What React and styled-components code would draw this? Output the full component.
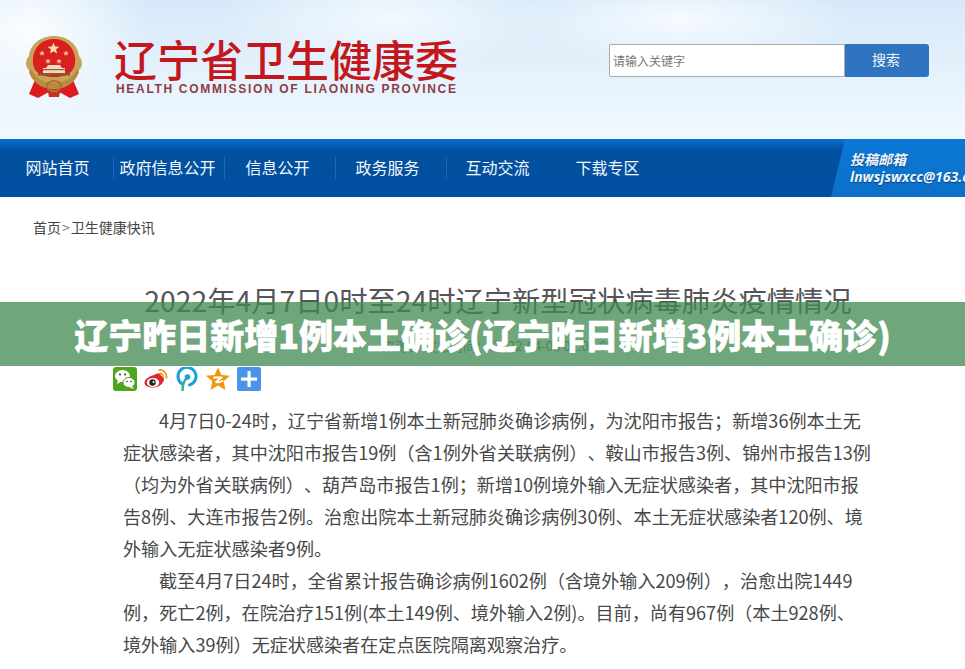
import React from "react";
import styled, { createGlobalStyle } from "styled-components";

const GlobalStyle = createGlobalStyle`
  html, body {
    margin: 0;
    padding: 0;
    background: #fff;
    overflow: hidden;
  }
  body {
    font-family: "Noto Sans CJK SC", "Liberation Sans", sans-serif;
  }
`;

const Page = styled.div`
  position: relative;
  width: 965px;
  height: 669px;
  overflow: hidden;
  background: #fff;
`;

const Header = styled.header`
  height: 139px;
  display: flex;
  align-items: flex-start;
  box-sizing: border-box;
  padding: 36px 36px 0 24px;
  background:
    radial-gradient(ellipse 120px 90px at 30px 30px, #fbfdff 0%, rgba(251, 253, 255, 0) 100%),
    radial-gradient(ellipse 170px 50px at 390px 18px, rgba(245, 250, 255, 0.9) 0%, rgba(245, 250, 255, 0) 100%),
    radial-gradient(ellipse 170px 45px at 680px 20px, rgba(247, 251, 255, 0.95) 0%, rgba(247, 251, 255, 0) 100%),
    linear-gradient(180deg, #d6e9f9 0%, #e3f0fb 45%, #f1f9ff 100%);
`;

const Emblem = styled.svg`
  width: 60px;
  height: 63px;
  flex: none;
`;

const Brand = styled.div`
  margin-left: 30px;
  width: 346px;
  flex: none;
`;

const BrandName = styled.div`
  font-size: 43px;
  line-height: 44px;
  font-weight: 500;
  color: #c3171d;
  white-space: nowrap;
`;

const BrandEnglish = styled.div`
  margin-top: 2px;
  margin-left: 2px;
  font-family: "Liberation Sans", sans-serif;
  font-size: 12px;
  line-height: 14px;
  font-weight: 700;
  letter-spacing: 1.68px;
  color: #8d3d46;
  white-space: nowrap;
`;

const SearchBox = styled.div`
  margin: 8px 0 0 auto;
  display: flex;
  height: 33px;
`;

const SearchInput = styled.div`
  width: 236px;
  box-sizing: border-box;
  display: flex;
  align-items: center;
  padding-left: 3px;
  background: #fff;
  border: 1px solid #ababab;
  border-radius: 2px 0 0 2px;
  font-size: 12px;
  color: #777;
`;

const SearchButton = styled.div`
  width: 84px;
  box-sizing: border-box;
  padding: 0 2px 4px 0;
  display: flex;
  align-items: center;
  justify-content: center;
  background: #2f74c0;
  border-radius: 0 3px 3px 0;
  font-size: 14px;
  color: #f2f7fc;
`;

const Nav = styled.nav`
  height: 58px;
  display: flex;
  padding-left: 3px;
  background: linear-gradient(180deg, #0a70d0 0%, #0460bb 9%, #02509f 20%, #024fa1 100%);
`;

const NavItem = styled.div`
  width: 111px;
  box-sizing: border-box;
  height: 58px;
  flex: none;
  display: flex;
  align-items: center;
  justify-content: center;
  position: relative;
  padding-right: ${(p) => p.$trim}px;
  padding-bottom: 2px;
  font-size: 16px;
  color: #f4f8fc;
  white-space: nowrap;

  &::after {
    content: ${(p) => (p.$divider ? '""' : "none")};
    position: absolute;
    right: 0;
    top: 18px;
    height: 22px;
    width: 1px;
    background: #1a66bd;
  }
`;

const Mailbox = styled.div`
  margin-left: auto;
  width: 134px;
  flex: none;
  box-sizing: border-box;
  padding: 11px 0 0 19px;
  overflow: hidden;
  white-space: nowrap;
  clip-path: polygon(14px 0, 100% 0, 100% 100%, 0 100%);
  background: linear-gradient(180deg, #0b78d6 0%, #0c70c8 100%);
  color: #eef6fd;
  font-style: italic;
  font-weight: 700;
  text-shadow: 0 1px 1px rgba(0, 40, 90, 0.7);
`;

const MailTitle = styled.div`
  font-size: 14px;
  line-height: 18px;
`;

const MailAddress = styled.div`
  font-family: "Open Sans", "Liberation Sans", sans-serif;
  font-size: 14px;
  line-height: 17px;
`;

const Breadcrumb = styled.div`
  display: flex;
  align-items: center;
  padding: 21px 0 0 33px;
  font-size: 14px;
  line-height: 19px;
  color: #444;
`;

const CrumbArrow = styled.span`
  margin: 0 1px;
  color: #777;
`;

const Article = styled.article`
  width: 750px;
  margin-left: 123px;
`;

const Title = styled.h1`
  margin: 43px -30px 0;
  font-size: 28.3px;
  line-height: 40px;
  font-weight: 400;
  color: #555;
  text-align: center;
  white-space: nowrap;
`;

const Meta = styled.div`
  margin-top: 16px;
  font-size: 13px;
  line-height: 20px;
  color: #777;
  text-align: center;
`;

const ShareRow = styled.div`
  display: flex;
  gap: 7px;
  margin: 11px 0 0 -10px;
`;

const ShareIcon = styled.svg`
  width: 24px;
  height: 24px;
  flex: none;
`;

const Body = styled.div`
  margin-top: 13px;
`;

const Paragraph = styled.p`
  margin: 0;
  font-size: 18.1px;
  line-height: 32px;
  color: #484848;
  text-indent: 36px;
  text-spacing-trim: space-all;
`;

const Banner = styled.div`
  position: absolute;
  left: 0;
  right: 0;
  top: 302px;
  height: 64px;
  display: flex;
  align-items: center;
  justify-content: center;
  background: rgba(66, 138, 82, 0.76);
  color: #fff;
  font-size: 34px;
  font-weight: 900;
  white-space: nowrap;
  -webkit-text-stroke: 0.6px #fff;
`;

function EmblemMark() {
  return (
    <Emblem viewBox="0 0 60 63">
      <path d="M11 44 L5 58 L14 62 L23 57 L30 55 L37 57 L46 62 L55 58 L49 44 Z" fill="#dc1b1f" />
      <path d="M30 0 C44 0 54 9 55 20 C59 24 59 31 55 34 C53 44 44 53 30 53 C16 53 7 44 5 34 C1 31 1 24 5 20 C6 9 16 0 30 0 Z" fill="#c9a35a" />
      <path d="M30 3 C42 3 50 11 51 22 C52 32 48 41 30 41 C12 41 8 32 9 22 C10 11 18 3 30 3 Z" fill="#d91f22" />
      <path d="M29.5 6.5 L31 10.5 L35.3 10.7 L32 13.4 L33.1 17.6 L29.5 15.2 L25.9 17.6 L27 13.4 L23.7 10.7 L28 10.5 Z" fill="#f5e2a0" />
      <path d="M18 14.5 l.8 1.8 2 .1 -1.5 1.3 .5 2 -1.8 -1.1 -1.8 1.1 .5 -2 -1.5 -1.3 2 -.1 Z" fill="#eed084" />
      <path d="M42 14.5 l.8 1.8 2 .1 -1.5 1.3 .5 2 -1.8 -1.1 -1.8 1.1 .5 -2 -1.5 -1.3 2 -.1 Z" fill="#eed084" />
      <path d="M24 22.5 l.8 1.8 2 .1 -1.5 1.3 .5 2 -1.8 -1.1 -1.8 1.1 .5 -2 -1.5 -1.3 2 -.1 Z" fill="#eed084" />
      <path d="M35 22.5 l.8 1.8 2 .1 -1.5 1.3 .5 2 -1.8 -1.1 -1.8 1.1 .5 -2 -1.5 -1.3 2 -.1 Z" fill="#eed084" />
      <path d="M24 29 H36 L38 32 H41 V37 H19 V32 H22 Z" fill="#eadcc0" />
      <rect x="19" y="33" width="22" height="1.2" fill="#b0503c" />
      <rect x="14" y="37" width="32" height="2.5" fill="#8f5a24" />
      <path d="M7 33 C12 44 22 47 30 47 C38 47 48 44 53 33 L55 36 C50 50 38 52 30 52 C22 52 10 50 5 36 Z" fill="#b98a3e" />
      <ellipse cx="30" cy="50" rx="7" ry="5" fill="none" stroke="#a8752c" strokeWidth="2.2" />
      <path d="M24 56 H36 L35 61 H25 Z" fill="#c2322a" />
    </Emblem>
  );
}

function WeChatIcon() {
  return (
    <ShareIcon viewBox="0 0 24 24">
      <rect width="24" height="24" rx="3" fill="#4ea61c" />
      <ellipse cx="9.5" cy="9" rx="7.5" ry="6" fill="#fff" />
      <path d="M5 13 L4 17 L9 14 Z" fill="#fff" />
      <ellipse cx="16" cy="15.5" rx="6" ry="5" fill="#fff" stroke="#4ea61c" />
      <path d="M19 19 L21 22 L16 20 Z" fill="#fff" />
      <circle cx="7" cy="7.5" r="1" fill="#333" />
      <circle cx="12" cy="7.5" r="1" fill="#333" />
      <circle cx="14" cy="14.5" r=".8" fill="#333" />
      <circle cx="18" cy="14.5" r=".8" fill="#333" />
    </ShareIcon>
  );
}

function WeiboIcon() {
  return (
    <ShareIcon viewBox="0 0 24 24">
      <path d="M10 8 C14 6 17 6 17 9 C20 9 21 12 19 15 C17 19 12 21 7 20.5 C3 20 0 18 0.5 15 C1 12 6 9 10 8 Z" fill="#e0242b" />
      <ellipse cx="9" cy="15.5" rx="6.2" ry="4.6" fill="#fff" />
      <circle cx="8.5" cy="15.5" r="3.2" fill="#222" />
      <circle cx="9.5" cy="15" r="1" fill="#fff" />
      <path d="M15 3 C19 2 23 6 22.5 11" fill="none" stroke="#f09a1a" strokeWidth="1.8" strokeLinecap="round" />
      <path d="M15.5 6.5 C17.5 6 19.5 8 19 10.5" fill="none" stroke="#f09a1a" strokeWidth="1.6" strokeLinecap="round" />
    </ShareIcon>
  );
}

function PinIcon() {
  return (
    <ShareIcon viewBox="0 0 24 24">
      <path d="M7.5 23.5 C7.5 18 8.5 13.5 12 11" fill="none" stroke="#42ad8a" strokeWidth="2.6" strokeLinecap="round" />
      <path d="M6.5 16.5 A9 9 0 1 1 14.5 18" fill="none" stroke="#1f9fdc" strokeWidth="3" strokeLinecap="round" />
      <circle cx="12.5" cy="10" r="2.8" fill="#1f9fdc" />
    </ShareIcon>
  );
}

function QzoneIcon() {
  return (
    <ShareIcon viewBox="0 0 24 24">
      <path d="M12 .5 L15.4 8 L24 8.8 L17.6 14.3 L19.5 23 L12 18.5 L4.5 23 L6.4 14.3 L0 8.8 L8.6 8 Z" fill="#f0960f" />
      <path d="M8 10.5 H15.5 L10 15 C12.5 15.5 14.5 15 16.5 14" fill="none" stroke="#fff" strokeWidth="1.9" strokeLinecap="round" strokeLinejoin="round" />
    </ShareIcon>
  );
}

function PlusIcon() {
  return (
    <ShareIcon viewBox="0 0 24 24">
      <rect width="24" height="24" rx="2" fill="#4b92ea" />
      <rect x="10.5" y="4" width="3.2" height="16" fill="#fff" />
      <rect x="4" y="10.5" width="16" height="3.2" fill="#fff" />
    </ShareIcon>
  );
}

const navItems = [
  { label: "网站首页", trim: 2, divider: true },
  { label: "政府信息公开", trim: 4, divider: true },
  { label: "信息公开", trim: 6, divider: true },
  { label: "政务服务", trim: 8, divider: true },
  { label: "互动交流", trim: 10, divider: false },
  { label: "下载专区", trim: 12, divider: false },
];

export default function App() {
  return (
    <Page>
      <GlobalStyle />
      <Header>
        <EmblemMark />
        <Brand>
          <BrandName>辽宁省卫生健康委</BrandName>
          <BrandEnglish>HEALTH COMMISSION OF LIAONING PROVINCE</BrandEnglish>
        </Brand>
        <SearchBox>
          <SearchInput>请输入关键字</SearchInput>
          <SearchButton>搜索</SearchButton>
        </SearchBox>
      </Header>
      <Nav>
        {navItems.map((item) => (
          <NavItem key={item.label} $trim={item.trim} $divider={item.divider}>
            {item.label}
          </NavItem>
        ))}
        <Mailbox>
          <MailTitle>投稿邮箱</MailTitle>
          <MailAddress>lnwsjswxcc@163.com</MailAddress>
        </Mailbox>
      </Nav>
      <Breadcrumb>
        首页<CrumbArrow>&gt;</CrumbArrow>卫生健康快讯
      </Breadcrumb>
      <Article>
        <Title>2022年4月7日0时至24时辽宁新型冠状病毒肺炎疫情情况</Title>
        <Meta>来源： 发布时间：(2022-04-08 01:01:00</Meta>
        <ShareRow>
          <WeChatIcon />
          <WeiboIcon />
          <PinIcon />
          <QzoneIcon />
          <PlusIcon />
        </ShareRow>
        <Body>
          <Paragraph>
            4月7日0-24时，辽宁省新增1例本土新冠肺炎确诊病例，为沈阳市报告；新增36例本土无症状感染者，其中沈阳市报告19例（含1例外省关联病例）、鞍山市报告3例、锦州市报告13例（均为外省关联病例）、葫芦岛市报告1例；新增10例境外输入无症状感染者，其中沈阳市报告8例、大连市报告2例。治愈出院本土新冠肺炎确诊病例30例、本土无症状感染者120例、境外输入无症状感染者9例。
          </Paragraph>
          <Paragraph>
            截至4月7日24时，全省累计报告确诊病例1602例（含境外输入209例），治愈出院1449例，死亡2例，在院治疗151例(本土149例、境外输入2例)。目前，尚有967例（本土928例、
            <br />
            境外输入39例）无症状感染者在定点医院隔离观察治疗。
          </Paragraph>
        </Body>
      </Article>
      <Banner>辽宁昨日新增1例本土确诊(辽宁昨日新增3例本土确诊)</Banner>
    </Page>
  );
}
